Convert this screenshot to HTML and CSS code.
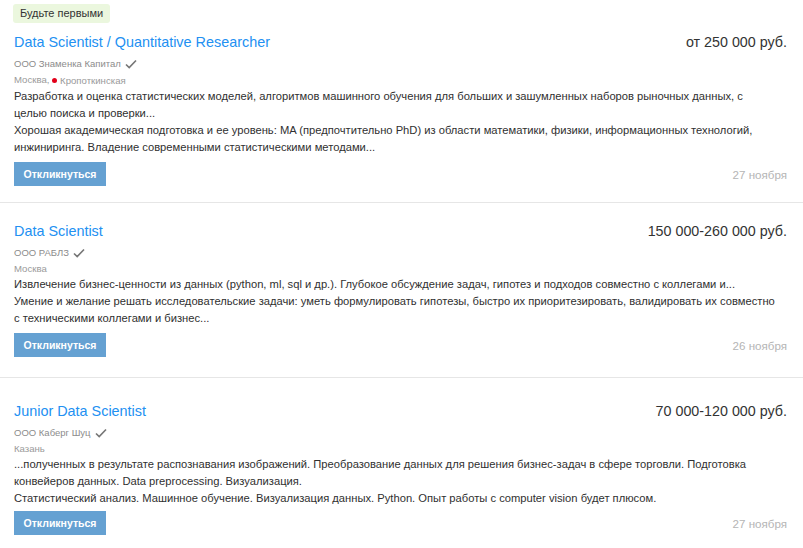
FILE: index.html
```html
<!DOCTYPE html>
<html lang="ru">
<head>
<meta charset="utf-8">
<title>Вакансии</title>
<link rel="stylesheet" href="styles.css">
</head>
<body>
<div class="list">
  <div class="badge-row"><span class="badge">Будьте первыми</span></div>

  <div class="vacancy first">
    <div class="head">
      <a class="title" href="#">Data Scientist / Quantitative Researcher</a>
      <div class="salary">от 250 000 руб.</div>
    </div>
    <div class="company">ООО Знаменка Капитал <svg class="check" viewBox="0 0 12 10" width="12" height="10"><path d="M1 5.5 L4.2 8.5 L11 1.5" fill="none" stroke="#777" stroke-width="1.7"/></svg></div>
    <div class="location">Москва, <span class="metro"><span class="dot"></span>Кропоткинская</span></div>
    <div class="snippet">Разработка и оценка статистических моделей, алгоритмов машинного обучения для больших и зашумленных наборов рыночных данных, с целью поиска и проверки...</div>
    <div class="snippet">Хорошая академическая подготовка и ее уровень: MA (предпочтительно PhD) из области математики, физики, информационных технологий, инжиниринга. Владение современными статистическими методами...</div>
    <div class="foot">
      <button class="respond">Откликнуться</button>
      <span class="date">27 ноября</span>
    </div>
  </div>

  <div class="vacancy second">
    <div class="head">
      <a class="title" href="#">Data Scientist</a>
      <div class="salary">150 000-260 000 руб.</div>
    </div>
    <div class="company">ООО РАБЛЗ <svg class="check" viewBox="0 0 12 10" width="12" height="10"><path d="M1 5.5 L4.2 8.5 L11 1.5" fill="none" stroke="#777" stroke-width="1.7"/></svg></div>
    <div class="location">Москва</div>
    <div class="snippet">Извлечение бизнес-ценности из данных (python, ml, sql и др.). Глубокое обсуждение задач, гипотез и подходов совместно с коллегами и...</div>
    <div class="snippet">Умение и желание решать исследовательские задачи: уметь формулировать гипотезы, быстро их приоритезировать, валидировать их совместно с техническими коллегами и бизнес...</div>
    <div class="foot">
      <button class="respond">Откликнуться</button>
      <span class="date">26 ноября</span>
    </div>
  </div>

  <div class="vacancy third">
    <div class="head">
      <a class="title" href="#">Junior Data Scientist</a>
      <div class="salary">70 000-120 000 руб.</div>
    </div>
    <div class="company">ООО Каберг Шуц <svg class="check" viewBox="0 0 12 10" width="12" height="10"><path d="M1 5.5 L4.2 8.5 L11 1.5" fill="none" stroke="#777" stroke-width="1.7"/></svg></div>
    <div class="location">Казань</div>
    <div class="snippet">...полученных в результате распознавания изображений. Преобразование данных для решения бизнес-задач в сфере торговли. Подготовка конвейеров данных. Data preprocessing. Визуализация.</div>
    <div class="snippet">Статистический анализ. Машинное обучение. Визуализация данных. Python. Опыт работы с computer vision будет плюсом.</div>
    <div class="foot">
      <button class="respond">Откликнуться</button>
      <span class="date">27 ноября</span>
    </div>
  </div>
</div>
</body>
</html>
```
FILE: styles.css
```css
html, body {
  margin: 0;
  padding: 0;
  background: #fff;
}
body {
  font-family: "Liberation Sans", Arial, sans-serif;
  color: #303030;
  font-size: 11.2px;
}
.badge-row {
  padding: 4px 0 0 13px;
  height: 19px;
}
.badge {
  display: inline-block;
  background: #ebf7de;
  border-radius: 3px;
  padding: 0 7px;
  line-height: 19px;
  font-size: 11px;
  color: #333;
}
.vacancy {
  padding: 18px 16px 20px 14px;
  border-bottom: 1px solid #e6e6e6;
}
.vacancy.first {
  padding-top: 9px;
  padding-bottom: 16px;
}
.vacancy.third {
  padding-top: 23px;
}
.head {
  display: flex;
  justify-content: space-between;
  align-items: baseline;
  line-height: 20px;
}
.title {
  font-size: 14.4px;
  color: #2290f2;
  text-decoration: none;
}
.salary {
  font-size: 14.3px;
  color: #333;
}
.company {
  margin-top: 4px;
  font-size: 9.5px;
  line-height: 16px;
  color: #8c8c8c;
  display: flex;
  align-items: center;
  gap: 4px;
}
.check {
  display: block;
}
.location {
  font-size: 9.6px;
  line-height: 15px;
  color: #9a9a9a;
}
.metro {
  display: inline-flex;
  align-items: center;
  gap: 3px;
}
.dot {
  width: 5px;
  height: 5px;
  border-radius: 50%;
  background: #e2001a;
}
.snippet {
  line-height: 17px;
  margin-right: 11px;
}
.foot {
  margin-top: 6px;
  display: flex;
  justify-content: space-between;
  align-items: center;
}
.third .foot {
  margin-top: 4px;
}
.respond {
  height: 24px;
  width: 92px;
  border: 0;
  border-radius: 0;
  background: #65a1d2;
  color: #fff;
  font-family: inherit;
  font-size: 10.5px;
  font-weight: bold;
  padding: 0;
}
.date {
  color: #b5b5b5;
  font-size: 11.6px;
}
```
